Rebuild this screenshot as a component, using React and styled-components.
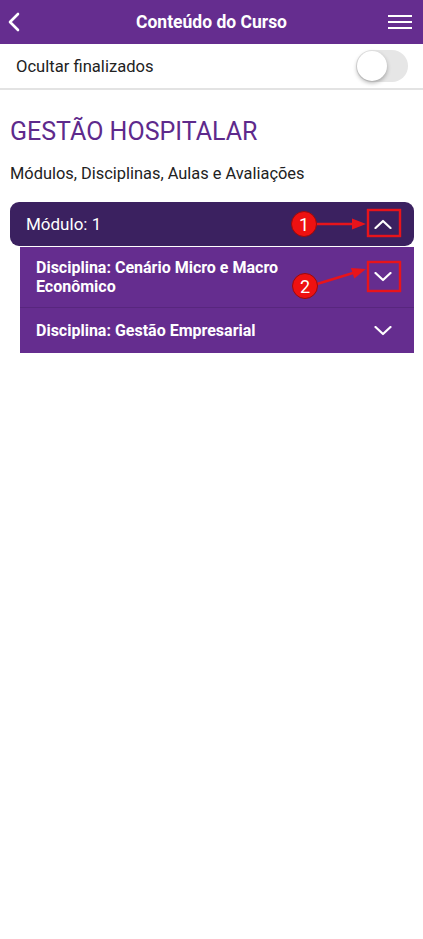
import React from 'react';
import styled, { createGlobalStyle } from 'styled-components';

const GlobalStyle = createGlobalStyle`
  html, body {
    margin: 0;
    padding: 0;
    background: #fff;
    font-family: Roboto, "Liberation Sans", Arial, sans-serif;
  }
`;

const Page = styled.div`
  position: relative;
  width: 423px;
  min-height: 939px;
  background: #fff;
`;

const Header = styled.header`
  height: 44px;
  background: #652d8f;
  display: flex;
  align-items: center;
  justify-content: space-between;
  padding: 0 11px 0 8px;
  box-sizing: border-box;
  color: #fff;
`;

const HeaderTitle = styled.h1`
  margin: 0;
  font-size: 17.5px;
  font-weight: 700;
  flex: 1;
  text-align: center;
  padding-left: 15px;
`;

const IconButton = styled.button`
  background: none;
  border: none;
  padding: 0;
  display: flex;
  align-items: center;
  color: #fff;
`;

const ToggleRow = styled.div`
  height: 46px;
  display: flex;
  align-items: center;
  justify-content: space-between;
  padding: 0 15px 0 16px;
  border-bottom: 2px solid #e3e3e3;
  box-sizing: border-box;
  font-size: 16.6px;
  color: #222;
`;

const Switch = styled.div`
  width: 52px;
  height: 32px;
  border-radius: 16px;
  background: #e6e6e6;
  position: relative;
`;

const Knob = styled.div`
  position: absolute;
  left: 1px;
  top: 1px;
  width: 30px;
  height: 30px;
  border-radius: 50%;
  background: #fff;
  box-shadow: 0 2px 4px rgba(0, 0, 0, 0.3);
`;

const Content = styled.main`
  padding: 28px 9px 0 10px;
`;

const CourseTitle = styled.h2`
  margin: 0;
  font-size: 25px;
  font-weight: 400;
  color: #5e2a8c;
  line-height: 28px;
`;

const Subtitle = styled.p`
  margin: 18px 0 0;
  font-size: 16.4px;
  color: #222;
  line-height: 20px;
`;

const Module = styled.div`
  margin-top: 18px;
`;

const ModuleHeader = styled.div`
  height: 44px;
  background: #3b2160;
  border-radius: 9px;
  display: flex;
  align-items: center;
  justify-content: space-between;
  padding: 0 22px 0 16px;
  color: #fff;
  font-size: 17px;
`;

const DisciplineList = styled.div`
  margin: 1px 0 0 10px;
`;

const Discipline = styled.div`
  min-height: 46px;
  background: #652d8f;
  display: flex;
  align-items: center;
  justify-content: space-between;
  padding: ${(p) => (p.$tall ? '11px 22px 11px 16px' : '0 22px 0 16px')};
  box-sizing: border-box;
  color: #fff;
  font-size: 16px;
  font-weight: 700;
  line-height: 19px;
  & + & {
    border-top: 1px solid #58267e;
  }
`;

const DisciplineName = styled.span`
  max-width: 290px;
`;

const Annotations = styled.svg`
  position: absolute;
  left: 0;
  top: 0;
  pointer-events: none;
`;

const Chevron = ({ up }) => (
  <svg width="18" height="10" viewBox="0 0 18 10">
    <path
      d={up ? 'M1.5 9 L9 2 L16.5 9' : 'M1.5 1 L9 8 L16.5 1'}
      fill="none"
      stroke="#fff"
      strokeWidth="2.2"
      strokeLinecap="round"
      strokeLinejoin="round"
    />
  </svg>
);

// red callout: numbered circle, arrow and box round the target
const Callout = ({ label, circle, line, head, box }) => (
  <g>
    <rect x={box[0]} y={box[1]} width={box[2]} height={box[3]} fill="none" stroke="#e8141b" strokeWidth="2.4" />
    <line x1={line[0]} y1={line[1]} x2={line[2]} y2={line[3]} stroke="#e8141b" strokeWidth="2.4" />
    <polygon points={head} fill="#e8141b" />
    <circle cx={circle[0]} cy={circle[1]} r="12.5" fill="#ee1111" stroke="#9a0a0a" strokeWidth="1" />
    <text
      x={circle[0]}
      y={circle[1] + 6.5}
      textAnchor="middle"
      fill="#fff"
      fontSize="18"
      fontFamily="Roboto, Arial, sans-serif"
    >
      {label}
    </text>
  </g>
);

export default function App() {
  return (
    <Page>
      <GlobalStyle />
      <Header>
        <IconButton aria-label="Voltar">
          <svg width="12" height="20" viewBox="0 0 12 20">
            <path d="M10 2 L2 10 L10 18" fill="none" stroke="#fff" strokeWidth="2.6" strokeLinecap="round" strokeLinejoin="round" />
          </svg>
        </IconButton>
        <HeaderTitle>Conteúdo do Curso</HeaderTitle>
        <IconButton aria-label="Menu">
          <svg width="24" height="16" viewBox="0 0 24 16">
            <rect x="0" y="1" width="24" height="2" fill="#fff" />
            <rect x="0" y="7" width="24" height="2" fill="#fff" />
            <rect x="0" y="13" width="24" height="2" fill="#fff" />
          </svg>
        </IconButton>
      </Header>
      <ToggleRow>
        <span>Ocultar finalizados</span>
        <Switch>
          <Knob />
        </Switch>
      </ToggleRow>
      <Content>
        <CourseTitle>GESTÃO HOSPITALAR</CourseTitle>
        <Subtitle>Módulos, Disciplinas, Aulas e Avaliações</Subtitle>
        <Module>
          <ModuleHeader>
            <span>Módulo: 1</span>
            <Chevron up />
          </ModuleHeader>
          <DisciplineList>
            <Discipline $tall>
              <DisciplineName>Disciplina: Cenário Micro e Macro Econômico</DisciplineName>
              <Chevron />
            </Discipline>
            <Discipline>
              <DisciplineName>Disciplina: Gestão Empresarial</DisciplineName>
              <Chevron />
            </Discipline>
          </DisciplineList>
        </Module>
      </Content>
      <Annotations width="423" height="939">
        <Callout
          label="1"
          circle={[304, 224]}
          line={[316, 224, 354, 224]}
          head="366,224 352,218.5 352,229.5"
          box={[368, 210, 32, 26]}
        />
        <Callout
          label="2"
          circle={[305, 286]}
          line={[317, 284, 353, 273]}
          head="366,269 354.3,278.5 350.9,267.9"
          box={[368, 262, 32, 29]}
        />
      </Annotations>
    </Page>
  );
}
